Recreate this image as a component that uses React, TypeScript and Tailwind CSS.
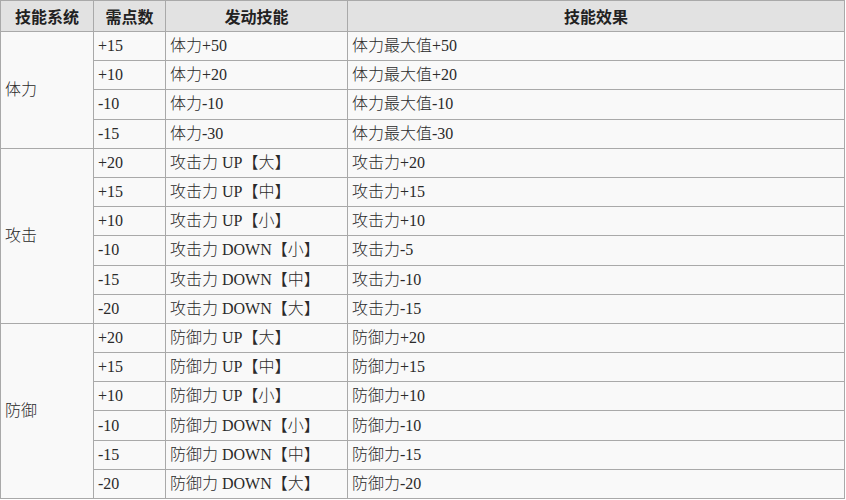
import React from 'react';

interface SkillRow {
    cost: string;
    skill: string;
    effect: string;
}

interface SkillGroup {
    system: string;
    rows: SkillRow[];
}

const groups: SkillGroup[] = [
    {
        system: '体力',
        rows: [
            { cost: '+15', skill: '体力+50', effect: '体力最大值+50' },
            { cost: '+10', skill: '体力+20', effect: '体力最大值+20' },
            { cost: '-10', skill: '体力-10', effect: '体力最大值-10' },
            { cost: '-15', skill: '体力-30', effect: '体力最大值-30' },
        ],
    },
    {
        system: '攻击',
        rows: [
            { cost: '+20', skill: '攻击力 UP【大】', effect: '攻击力+20' },
            { cost: '+15', skill: '攻击力 UP【中】', effect: '攻击力+15' },
            { cost: '+10', skill: '攻击力 UP【小】', effect: '攻击力+10' },
            { cost: '-10', skill: '攻击力 DOWN【小】', effect: '攻击力-5' },
            { cost: '-15', skill: '攻击力 DOWN【中】', effect: '攻击力-10' },
            { cost: '-20', skill: '攻击力 DOWN【大】', effect: '攻击力-15' },
        ],
    },
    {
        system: '防御',
        rows: [
            { cost: '+20', skill: '防御力 UP【大】', effect: '防御力+20' },
            { cost: '+15', skill: '防御力 UP【中】', effect: '防御力+15' },
            { cost: '+10', skill: '防御力 UP【小】', effect: '防御力+10' },
            { cost: '-10', skill: '防御力 DOWN【小】', effect: '防御力-10' },
            { cost: '-15', skill: '防御力 DOWN【中】', effect: '防御力-15' },
            { cost: '-20', skill: '防御力 DOWN【大】', effect: '防御力-20' },
        ],
    },
];

const cell = 'border border-[#a9a9a9] px-[4px] text-left align-middle font-light';
const head = 'border border-[#a9a9a9] bg-[#e2e2e2] text-center align-middle font-bold text-[#222]';

export default function App() {
    return (
        <div className="bg-white w-[846px] h-[500px] overflow-hidden">
            <table
                className="table-fixed border-collapse w-[845px] bg-[#f9f9f9] text-[16px] leading-none text-[#2a2a2a]"
                style={{ fontFamily: '"Liberation Serif", "Noto Sans CJK SC", serif' }}
            >
                <colgroup>
                    <col className="w-[93px]" />
                    <col className="w-[72px]" />
                    <col className="w-[182px]" />
                    <col />
                </colgroup>
                <thead>
                    <tr className="h-[31px]" style={{ fontFamily: '"Noto Sans CJK SC", sans-serif' }}>
                        <th className={head}>技能系统</th>
                        <th className={head}>需点数</th>
                        <th className={head}>发动技能</th>
                        <th className={head}>技能效果</th>
                    </tr>
                </thead>
                <tbody>
                    {groups.map((group) =>
                        group.rows.map((row, index) => (
                            <tr key={group.system + index} className="h-[29.2px]">
                                {index === 0 && (
                                    <td rowSpan={group.rows.length} className={cell}>
                                        {group.system}
                                    </td>
                                )}
                                <td className={cell}>{row.cost}</td>
                                <td className={cell}>{row.skill}</td>
                                <td className={cell}>{row.effect}</td>
                            </tr>
                        ))
                    )}
                </tbody>
            </table>
        </div>
    );
}
